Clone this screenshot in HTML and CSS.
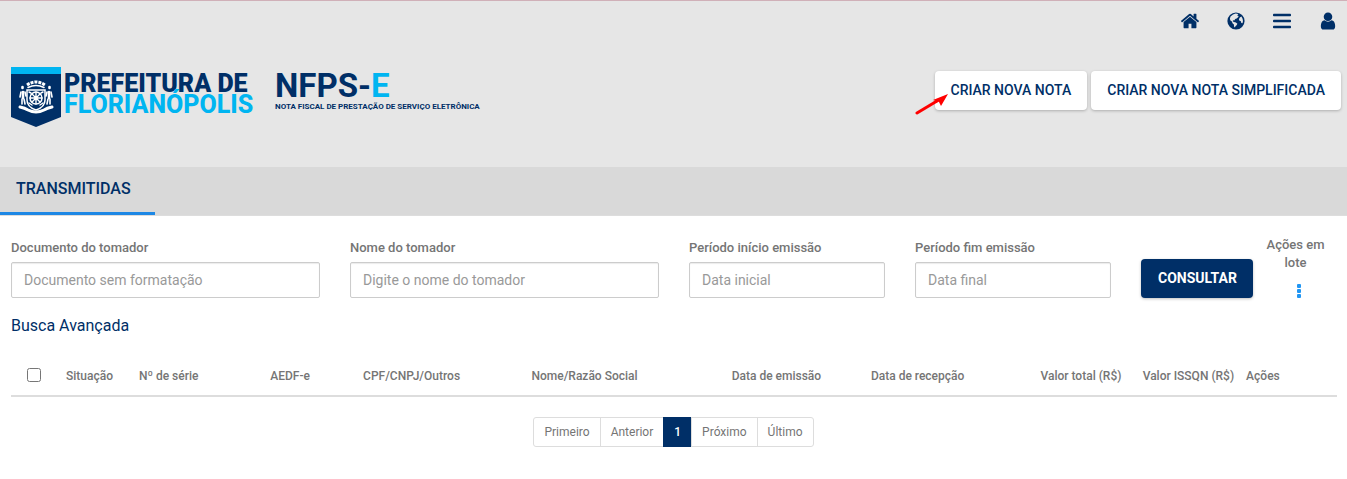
FILE: index.html
```html
<!DOCTYPE html>
<html lang="pt-BR">
<head>
<meta charset="utf-8">
<meta name="viewport" content="width=device-width, initial-scale=1">
<title>NFPS-E - Prefeitura de Florianópolis</title>
<link rel="stylesheet" href="styles.css">
</head>
<body>
<header class="header">
  <nav class="topnav" aria-label="Principal">
    <a href="#" aria-label="Início"><svg class="icon" viewBox="0 0 1792 1792"><path d="M1472 992v480q0 26-19 45t-45 19h-384v-384h-256v384h-384q-26 0-45-19t-19-45v-480q0-1 .5-3t.5-3l575-474 575 474q1 2 1 6zm223-69l-62 74q-8 9-21 11h-3q-13 0-21-7l-692-577-692 577q-12 8-24 7-13-2-21-11l-62-74q-8-10-7-23.5t11-21.5l719-599q32-26 76-26t76 26l244 204v-195q0-14 9-23t23-9h192q14 0 23 9t9 23v408l219 182q10 8 11 21.5t-7 23.5z"/></svg></a>
    <a href="#" aria-label="Idioma"><svg class="icon" viewBox="0 0 20 20"><circle cx="10" cy="10" r="8.6"/><path class="land" d="M7 3.500l2.500-1 1.800.3 1 .9-1.300.8 1.600.4-.3 1.200-1.600 1.300-1.500.7-.9 1.300-1.200-.1-.4 1 1.200.7 2 .5 1.500 1.200-.8 1.500-1 .8-.7 1.600-.9-1-.1-2.200-1.400-1.200-.6-1.600-1.500-1.200-.5-1.600.6-2.400zM13.800 6.600l1.600-1 1.200 2.100.4 2.300-.5 2.300-1.200-.4-.4-1.600-1.400-.6-.6-1.400z"/></svg></a>
    <a href="#" aria-label="Menu"><svg class="icon" viewBox="0 0 20 20"><rect x="1" y="2.800" width="18" height="2.500" rx=".8"/><rect x="1" y="8.800" width="18" height="2.500" rx=".8"/><rect x="1" y="14.800" width="18" height="2.500" rx=".8"/></svg></a>
    <a href="#" aria-label="Usuário"><svg class="icon" viewBox="0 0 1792 1792"><path d="M1536 1399q0 109-62.5 187t-150.5 78h-854q-88 0-150.5-78t-62.5-187q0-85 8.5-160.5t31.5-152 58.5-131 94-89 134.5-34.5q131 128 313 128t313-128q76 0 134.5 34.5t94 89 58.5 131 31.5 152 8.5 160.5zm-256-887q0 159-112.5 271.5t-271.5 112.5-271.5-112.5-112.5-271.5 112.5-271.5 271.5-112.5 271.5 112.5 112.5 271.5z"/></svg></a>
  </nav>
  <div class="masthead">
    <div class="brand">
      <svg class="shield" viewBox="0 0 50 60" aria-hidden="true">
        <path fill="#002f67" d="M0 6h50v44L25 60 0 50z"/>
        <path fill="#00b5f1" d="M0 0h50v7H0z"/>
        <g fill="none" stroke="#fff" stroke-linecap="round">
          <path stroke-width="3" stroke-dasharray="3 1" stroke-linecap="butt" d="M16 18q9-6 18 0"/>
          <path stroke-width="1.6" d="M17 20.500q8-4 16 0"/>
          <path stroke-width="1.500" d="M16 23h18v10q0 7-9 10-9-3-9-10z"/>
          <circle cx="25" cy="31" r="6" stroke-width="1.500"/>
          <path stroke-width="1.400" d="M25 25v12M19 31h12M21 27l8 8M29 27l-8 8M18 25l2 1M32 25l-2 1M18 36l3 2M32 36l-3 2"/>
          <path stroke-width="2.600" d="M11.500 20v1M12 25v6M38.500 20v1M38 25v6"/>
          <path stroke-width="1.600" d="M10 25l-1 5M14 25l1 4M11 32v5M13 32l1 5M36 25l-1 4M40 25l1 5M37 32l-1 5M39 32v5"/>
          <path stroke-width="3" d="M9 40q5 1 8 3 8 4 16 0 3-2 8-3"/>
        </g>
      </svg>
      <div class="city"><span class="city-top">PREFEITURA DE</span><span class="city-name">FLORIANÓPOLIS</span></div>
      <div class="product"><span class="product-name">NFPS-<span class="accent">E</span></span><span class="product-sub">NOTA FISCAL DE PRESTAÇÃO DE SERVIÇO ELETRÔNICA</span></div>
    </div>
    <div class="actions">
      <button class="btn btn-light" type="button">CRIAR NOVA NOTA</button>
      <button class="btn btn-light" type="button">CRIAR NOVA NOTA SIMPLIFICADA</button>
      <svg class="pointer" viewBox="0 0 34 24" aria-hidden="true"><path d="M2 21L22 9" stroke="#f00" stroke-width="3" stroke-linecap="round"/><path fill="#f00" d="M33 2L26 14l-2-4-6-2z"/></svg>
    </div>
  </div>
</header>
<nav class="tabs" aria-label="Notas"><a class="tab" href="#" aria-current="page">TRANSMITIDAS</a></nav>
<main class="content">
  <form class="filters">
    <div class="field wide"><label for="doc">Documento do tomador</label><input id="doc" type="text" placeholder="Documento sem formatação"></div>
    <div class="field wide"><label for="nome">Nome do tomador</label><input id="nome" type="text" placeholder="Digite o nome do tomador"></div>
    <div class="field"><label for="inicio">Período início emissão</label><input id="inicio" type="text" placeholder="Data inicial"></div>
    <div class="field"><label for="fim">Período fim emissão</label><input id="fim" type="text" placeholder="Data final"></div>
    <button class="btn btn-primary" type="button">CONSULTAR</button>
    <div class="batch"><span id="lote">Ações em lote</span><button class="more" type="button" aria-labelledby="lote"><svg viewBox="0 0 4 14"><rect width="4" height="4" rx="1"/><rect y="5" width="4" height="4" rx="1"/><rect y="10" width="4" height="4" rx="1"/></svg></button></div>
  </form>
  <a class="advanced" href="#">Busca Avançada</a>
  <table class="notes">
    <colgroup><col class="c-check"><col class="c-status"><col class="c-serie"><col class="c-aedf"><col class="c-doc"><col class="c-name"><col class="c-sent"><col class="c-received"><col class="c-total"><col class="c-tax"><col class="c-actions"></colgroup>
    <thead><tr>
      <th class="check"><input type="checkbox" aria-label="Selecionar todas"></th>
      <th>Situação</th><th>Nº de série</th><th>AEDF-e</th><th>CPF/CNPJ/Outros</th><th>Nome/Razão Social</th><th>Data de emissão</th><th>Data de recepção</th>
      <th class="num">Valor total (R$)</th><th class="num">Valor ISSQN (R$)</th><th>Ações</th>
    </tr></thead>
  </table>
  <nav class="pagination" aria-label="Paginação"><a href="#">Primeiro</a><a href="#">Anterior</a><a class="active" href="#" aria-current="page">1</a><a href="#">Próximo</a><a href="#">Último</a></nav>
</main>
</body>
</html>
```
FILE: styles.css
```css
* { box-sizing: border-box; }
body { margin: 0; background: #fff; color: #757575; font-family: Roboto, "Liberation Sans", sans-serif; font-size: 13px; }
a { color: inherit; text-decoration: none; }
button, input { font-family: inherit; }

.header { height: 167px; border-top: 1px solid #d0b0b8; background: #e6e6e6; }
.topnav { display: flex; justify-content: flex-end; gap: 26px; padding: 10px 9px 0; }
.topnav a { display: block; height: 20px; }
.icon { display: block; width: 20px; height: 20px; fill: #002f67; }
.icon .land { fill: #e6e6e6; }
.masthead { display: flex; justify-content: space-between; align-items: flex-start; padding: 36px 6px 0 11px; }
.brand { display: flex; color: #002f67; white-space: nowrap; }
.shield { width: 50px; height: 60px; }
.city { display: flex; flex-direction: column; width: 214px; padding: 6px 0 0 3px; font-size: 25px; font-weight: 900; line-height: 21px; }
.city-name, .accent { color: #00b5f1; }
.city-name { font-weight: 800; }
.product { display: flex; flex-direction: column; font-weight: 700; }
.product-name { padding-top: 2px; font-size: 33px; line-height: 34px; }
.product-sub { font-size: 8px; line-height: 8px; }
.actions { position: relative; display: flex; gap: 4px; padding-top: 4px; }
.btn { height: 39px; border: 0; border-radius: 4px; padding: 0 16px 1px; font-size: 14px; font-weight: 500; white-space: nowrap; box-shadow: 0 1px 3px rgba(0, 0, 0, .25); }
.btn-light { background: #fff; color: #002f67; }
.pointer { position: absolute; left: -20px; top: 25px; width: 34px; height: 24px; }

.tabs { display: flex; border-bottom: 1px solid #ddd; background: #d9d9d9; }
.tab { height: 48px; padding: 0 24px 0 16px; border-bottom: 3px solid #1e88e5; color: #002f67; font-size: 16px; font-weight: 500; line-height: 44px; }

.content { padding: 20px 10px 32px 11px; }
.filters { display: grid; grid-template-columns: repeat(12, minmax(0, 1fr)); column-gap: 30px; align-items: end; height: 62px; }
.field { grid-column: span 2; display: flex; flex-direction: column; gap: 5px; }
.wide { grid-column: span 3; }
.field label, .batch { font-weight: 500; line-height: 18px; }
.field input { width: 100%; height: 36px; border: 1px solid #ccc; border-radius: 2px; padding: 0 12px; font-size: 14px; box-shadow: inset 0 1px 1px rgba(0, 0, 0, .08); }
.field input::placeholder { color: #999; opacity: 1; }
.btn-primary { justify-self: start; padding: 0 16px 1px 17px; background: #002f67; color: #fff; font-weight: 700; }
.batch { display: flex; flex-direction: column; align-items: center; padding: 0 8px; text-align: center; }
.more { margin-top: 12px; margin-left: 6px; border: 0; padding: 0; background: none; }
.more svg { display: block; width: 4px; height: 14px; fill: #2196f3; }
.advanced { display: inline-block; margin-top: 18px; color: #002f67; font-size: 16px; line-height: 20px; }

.notes { width: 100%; margin-top: 19px; table-layout: fixed; border-collapse: collapse; }
.notes th { height: 41px; padding: 2px 6px 0; border-bottom: 2px solid #ddd; font-size: 12px; font-weight: 500; text-align: left; white-space: nowrap; }
.notes .check { padding-top: 0; }
.notes .num { text-align: right; }
.notes .check input { display: block; width: 14px; height: 14px; margin: 0 10px; }
.c-check { width: 3.7%; }
.c-status { width: 5.5%; }
.c-serie { width: 9.9%; }
.c-aedf { width: 7%; }
.c-doc { width: 12.7%; }
.c-name { width: 15.1%; }
.c-sent { width: 10.5%; }
.c-received { width: 10.5%; }
.c-total { width: 9.3%; }
.c-tax { width: 8.5%; }
.c-actions { width: 7.3%; }

.pagination { display: flex; justify-content: center; margin-top: 20px; font-size: 12px; line-height: 28px; }
.pagination a { margin-left: -1px; border: 1px solid #ddd; padding: 0 10px; }
.pagination a:first-child { border-radius: 3px 0 0 3px; }
.pagination a:last-child { border-radius: 0 3px 3px 0; }
.pagination .active { border-color: #002f67; background: #002f67; color: #fff; font-weight: 500; }
```
